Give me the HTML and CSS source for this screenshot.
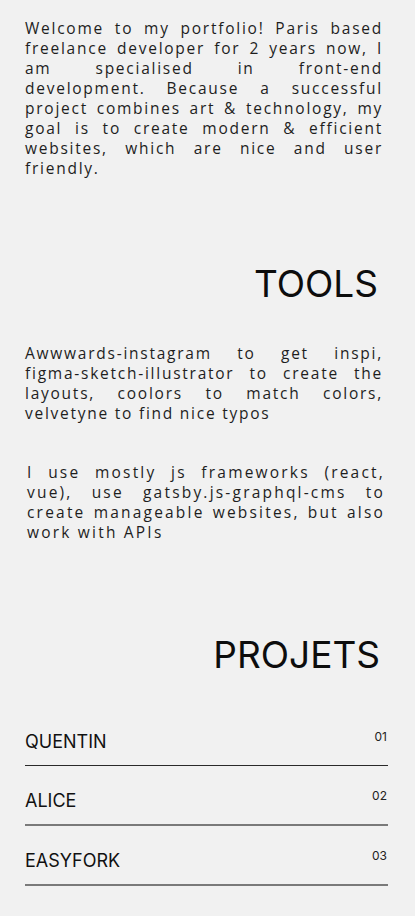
FILE: index.html
```html
<!DOCTYPE html>
<html lang="en">
<head>
  <meta charset="UTF-8">
  <title>Portfolio</title>
  <link rel="stylesheet" href="styles.css">
</head>
<body>
  <div class="page">
    <p class="text intro">Welcome to my portfolio! Paris based freelance developer for 2 years now, I am specialised in front-end development. Because a successful project combines art &amp; technology, my goal is to create modern &amp; efficient websites, which are nice and user friendly.</p>

    <h2 class="title tools-title">TOOLS</h2>

    <p class="text">Awwwards-instagram to get inspi, figma-sketch-illustrator to create the layouts, coolors to match colors, velvetyne to find nice typos</p>

    <p class="text second">I use mostly js frameworks (react, vue), use gatsby.js-graphql-cms to create manageable websites, but also work with APIs</p>

    <h2 class="title projects-title">PROJETS</h2>

    <ul class="projects">
      <li class="project">
        <span class="name">QUENTIN</span>
        <span class="num">01</span>
      </li>
      <li class="project">
        <span class="name">ALICE</span>
        <span class="num">02</span>
      </li>
      <li class="project">
        <span class="name">EASYFORK</span>
        <span class="num">03</span>
      </li>
    </ul>
  </div>
</body>
</html>
```

FILE: styles.css
```css
body {
  margin: 0;
  background: #f1f1f1;
  color: #1e1e1e;
  font-family: 'Open Sans', sans-serif;
}

.page {
  padding: 18px 27px 30px 25px;
}

.text {
  margin: 0 5px 0 0;
  font-size: 15.5px;
  line-height: 20px;
  letter-spacing: 1.75px;
  text-align: justify;
}

.text.second {
  margin-top: 39px;
  margin-right: 3px;
  padding-left: 2px;
  letter-spacing: 2.2px;
}

.title {
  margin: 0;
  font-family: 'Inter', sans-serif;
  font-weight: 400;
  font-size: 37px;
  line-height: 44px;
  text-align: right;
  color: #0d0d0d;
}

.tools-title {
  margin-top: 84px;
  margin-bottom: 37px;
  padding-right: 10px;
}

.projects-title {
  margin-top: 91px;
  margin-bottom: 30px;
  padding-right: 8px;
}

.projects {
  list-style: none;
  margin: 0;
  padding: 0;
}

.project {
  display: flex;
  justify-content: space-between;
  align-items: flex-start;
  padding: 24px 1px 12px 0;
  border-bottom: 2px solid #7a7a7a;
}

.project:first-child {
  border-bottom: 1px solid #2a2a2a;
}

.name {
  font-family: 'Inter', sans-serif;
  font-size: 18px;
  line-height: 22px;
  color: #111;
}

.num {
  font-family: 'Inter', sans-serif;
  font-size: 12px;
  line-height: 12px;
  color: #222;
}
```
